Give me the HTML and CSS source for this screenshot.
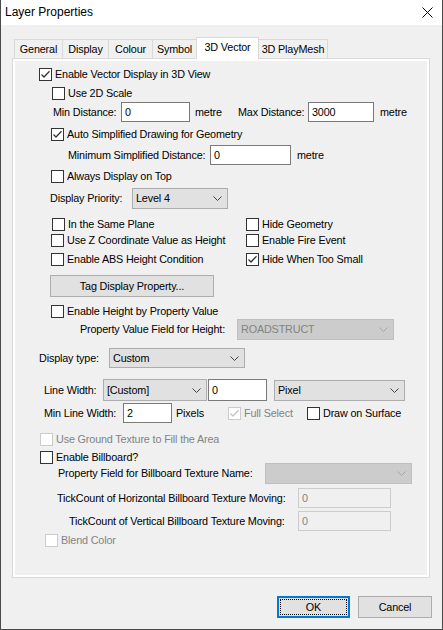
FILE: index.html
```html
<!DOCTYPE html>
<html>
<head>
<meta charset="utf-8">
<title>Layer Properties</title>
<link rel="stylesheet" href="styles.css">
</head>
<body>
<div class="win">
  <div class="titlebar">
    <span class="title">Layer Properties</span>
    <svg class="close" width="11" height="11" viewBox="0 0 11 11"><path d="M0.5 0.5L10.5 10.5M10.5 0.5L0.5 10.5" stroke="#000" stroke-width="1" fill="none"/></svg>
  </div>

  <div class="tabs">
    <div class="tab t-general">General</div>
    <div class="tab t-display">Display</div>
    <div class="tab t-colour">Colour</div>
    <div class="tab t-symbol">Symbol</div>
    <div class="tab t-vector active">3D Vector</div>
    <div class="tab t-mesh">3D PlayMesh</div>
  </div>

  <div class="panel">
    <div class="row cbrow r1">
      <span class="cb"><svg viewBox="0 0 11 11"><polyline points="1.5,5.5 4,8 9.5,2.2"/></svg></span><span class="lbl">Enable Vector Display in 3D View</span>
    </div>
    <div class="row cbrow r2">
      <span class="cb"></span><span class="lbl">Use 2D Scale</span>
    </div>
    <div class="row h20 r3">
      <span class="txt w-mind">Min Distance:</span>
      <span class="field w-mindin">0</span>
      <span class="txt unit1">metre</span>
      <span class="txt w-maxd">Max Distance:</span>
      <span class="field w-maxdin">3000</span>
      <span class="txt unit2">metre</span>
    </div>
    <div class="row cbrow r4">
      <span class="cb"><svg viewBox="0 0 11 11"><polyline points="1.5,5.5 4,8 9.5,2.2"/></svg></span><span class="lbl">Auto Simplified Drawing for Geometry</span>
    </div>
    <div class="row h20 r5">
      <span class="txt w-msd">Minimum Simplified Distance:</span>
      <span class="field w-msdin">0</span>
      <span class="txt unit3">metre</span>
    </div>
    <div class="row cbrow r6">
      <span class="cb"></span><span class="lbl">Always Display on Top</span>
    </div>
    <div class="row h21 r7">
      <span class="txt w-dp">Display Priority:</span>
      <span class="sel w-dpsel"><span>Level 4</span><svg class="chev" viewBox="0 0 9 5"><polyline points="0.5,0.5 4.5,4.5 8.5,0.5"/></svg></span>
    </div>
    <div class="row cbrow r8">
      <div class="col1 c1a"><span class="cb"></span><span class="lbl">In the Same Plane</span></div>
      <div class="col2"><span class="cb"></span><span class="lbl">Hide Geometry</span></div>
    </div>
    <div class="row cbrow r9">
      <div class="col1"><span class="cb"></span><span class="lbl">Use Z Coordinate Value as Height</span></div>
      <div class="col2"><span class="cb"></span><span class="lbl">Enable Fire Event</span></div>
    </div>
    <div class="row cbrow r10">
      <div class="col1"><span class="cb"></span><span class="lbl">Enable ABS Height Condition</span></div>
      <div class="col2"><span class="cb"><svg viewBox="0 0 11 11"><polyline points="1.5,5.5 4,8 9.5,2.2"/></svg></span><span class="lbl">Hide When Too Small</span></div>
    </div>
    <div class="row h22 r11">
      <span class="btn w-tag">Tag Display Property...</span>
    </div>
    <div class="row cbrow r12">
      <span class="cb"></span><span class="lbl">Enable Height by Property Value</span>
    </div>
    <div class="row h21 r13">
      <span class="txt w-pvf">Property Value Field for Height:</span>
      <span class="sel dis w-pvfsel"><span>ROADSTRUCT</span><svg class="chev" viewBox="0 0 9 5"><polyline points="0.5,0.5 4.5,4.5 8.5,0.5"/></svg></span>
    </div>
    <div class="row h20 r14">
      <span class="txt w-dt">Display type:</span>
      <span class="sel w-dtsel"><span>Custom</span><svg class="chev" viewBox="0 0 9 5"><polyline points="0.5,0.5 4.5,4.5 8.5,0.5"/></svg></span>
    </div>
    <div class="row h22 r15">
      <span class="txt w-lw">Line Width:</span>
      <span class="sel w-lwsel"><span>[Custom]</span><svg class="chev" viewBox="0 0 9 5"><polyline points="0.5,0.5 4.5,4.5 8.5,0.5"/></svg></span>
      <span class="field w-lwin">0</span>
      <span class="sel w-pxsel"><span>Pixel</span><svg class="chev" viewBox="0 0 9 5"><polyline points="0.5,0.5 4.5,4.5 8.5,0.5"/></svg></span>
    </div>
    <div class="row h20 r16">
      <span class="txt w-mlw">Min Line Width:</span>
      <span class="field w-mlwin">2</span>
      <span class="txt w-pixels">Pixels</span>
      <div class="fullsel"><span class="cb dis"><svg viewBox="0 0 11 11"><polyline points="1.5,5.5 4,8 9.5,2.2"/></svg></span><span class="lbl gray">Full Select</span></div>
      <span class="cb"></span><span class="lbl">Draw on Surface</span>
    </div>
    <div class="row cbrow r17">
      <span class="cb dis"></span><span class="lbl gray">Use Ground Texture to Fill the Area</span>
    </div>
    <div class="row cbrow r18">
      <span class="cb"></span><span class="lbl">Enable Billboard?</span>
    </div>
    <div class="row h21 r19">
      <span class="txt w-pfb">Property Field for Billboard Texture Name:</span>
      <span class="sel dis w-pfbsel"><span></span><svg class="chev" viewBox="0 0 9 5"><polyline points="0.5,0.5 4.5,4.5 8.5,0.5"/></svg></span>
    </div>
    <div class="row h20 r20">
      <span class="txt w-tch">TickCount of Horizontal Billboard Texture Moving:</span>
      <span class="field dis w-tick">0</span>
    </div>
    <div class="row h20 r21">
      <span class="txt w-tcv">TickCount of Vertical Billboard Texture Moving:</span>
      <span class="field dis w-tick">0</span>
    </div>
    <div class="row cbrow r22">
      <span class="cb dis"></span><span class="lbl gray">Blend Color</span>
    </div>
  </div>

  <div class="buttons">
    <span class="btn default w-ok"><span class="focus">OK</span></span>
    <span class="btn w-cancel">Cancel</span>
  </div>
</div>
</body>
</html>
```

FILE: styles.css
```css
* { box-sizing: border-box; }
html, body { margin: 0; padding: 0; }
body {
  width: 443px;
  height: 630px;
  overflow: hidden;
  background: #f0f0f0;
  font-family: "Liberation Sans", Arial, sans-serif;
  font-size: 10.8px;
  letter-spacing: -0.15px;
  line-height: 13px;
  color: #000;
}
.win {
  width: 443px;
  height: 630px;
  background: #f0f0f0;
  border-left: 1px solid #4a4a4a;
  border-right: 1px solid #4a4a4a;
  border-bottom: 1px solid #4a4a4a;
  display: flex;
  flex-direction: column;
}
.titlebar {
  height: 25px;
  flex: none;
  background: #fff;
  display: flex;
  align-items: center;
  justify-content: space-between;
  padding: 0 9px 0 4px;
  font-size: 12px;
  letter-spacing: 0;
}
.close { display: block; }

/* tabs */
.tabs {
  margin-top: 12px;
  margin-left: 13px;
  height: 21px;
  display: flex;
  align-items: flex-end;
  flex: none;
}
.tab {
  height: 19px;
  border: 1px solid #d9d9d9;
  border-bottom: none;
  background: #f0f0f0;
  margin-left: -1px;
  text-align: center;
  line-height: 18px;
  white-space: nowrap;
}
.tab:first-child { margin-left: 0; }
.tab.active {
  height: 22px;
  background: #fff;
  margin-bottom: -1px;
  position: relative;
  z-index: 1;
  line-height: 18px;
}
.t-general { width: 49px; }
.t-display { width: 47px; }
.t-colour { width: 45px; }
.t-symbol { width: 45px; }
.t-vector { width: 63px; }
.t-mesh { width: 70px; }

/* panel */
.panel {
  margin-left: 11px;
  width: 418px;
  height: 520px;
  flex: none;
  border: 1px solid #d9d9d9;
  background: #f0f0f0;
  box-shadow: inset 0 0 0 2px #fff;
}
.row {
  display: flex;
  align-items: center;
  white-space: nowrap;
}
.cbrow { height: 13px; }
.h20 { height: 20px; }
.h21 { height: 21px; }
.h22 { height: 22px; }

.r1 { margin-top: 9px; padding-left: 26px; }
.r2 { margin-top: 6px; padding-left: 39px; }
.r3 { margin-top: 2px; padding-left: 40px; }
.r4 { margin-top: 6px; padding-left: 38px; }
.r5 { margin-top: 4px; padding-left: 55px; }
.r6 { margin-top: 5px; padding-left: 38px; }
.r7 { margin-top: 5px; padding-left: 37px; }
.r8 { margin-top: 9px; padding-left: 39px; }
.r9 { margin-top: 3px; padding-left: 38px; }
.r10 { margin-top: 6px; padding-left: 38px; }
.r11 { margin-top: 9px; padding-left: 37px; }
.r12 { margin-top: 8px; padding-left: 38px; }
.r13 { margin-top: 1px; padding-left: 67px; }
.r14 { margin-top: 8px; padding-left: 26px; }
.r15 { margin-top: 11px; padding-left: 31px; }
.r16 { margin-top: 2px; padding-left: 31px; }
.r17 { margin-top: 10px; padding-left: 27px; }
.r18 { margin-top: 5px; padding-left: 27px; }
.r19 { margin-top: -1px; padding-left: 45px; }
.r20 { margin-top: 4px; padding-left: 44px; }
.r21 { margin-top: 3px; padding-left: 56px; }
.r22 { margin-top: 3px; padding-left: 32px; }

.col1 { width: 195px; display: flex; align-items: center; }
.col1.c1a { width: 194px; }
.col2 { display: flex; align-items: center; }

/* checkbox */
.cb {
  width: 13px;
  height: 13px;
  flex: none;
  border: 1px solid #333;
  background: #fff;
  display: inline-block;
}
.cb svg { display: block; width: 11px; height: 11px; }
.cb polyline { fill: none; stroke: #333; stroke-width: 1.25; }
.cb.dis { border-color: #cccccc; background: #fff; }
.cb.dis polyline { stroke: #c4c4c4; }
.lbl { margin-left: 3px; }
.gray { color: #838383; }

.txt { flex: none; }
.w-mind { width: 68px; }
.w-maxd { width: 70px; }
.unit1 { margin-left: 5px; width: 43px; }
.unit2 { margin-left: 6px; }
.w-msd { width: 142px; }
.unit3 { margin-left: 6px; }
.w-dp { width: 82px; }
.w-pvf { width: 157px; }
.w-dt { width: 70px; }
.w-lw { width: 59px; }
.w-mlw { width: 79px; }
.w-pixels { margin-left: 4px; width: 52px; }
.w-pfb { width: 207px; }
.w-tch { width: 241px; }
.w-tcv { width: 229px; }

/* text field */
.field {
  height: 20px;
  flex: none;
  border: 1px solid #7a7a7a;
  background: #fff;
  padding: 0 3px;
  display: flex;
  align-items: center;
}
.field.dis { border-color: #cccccc; background: #f0f0f0; color: #838383; }
.w-mindin { width: 69px; }
.w-maxdin { width: 66px; }
.w-msdin { width: 81px; }
.w-lwin { width: 59px; height: 22px; margin-left: 1px; }
.w-mlwin { width: 49px; }
.w-tick { width: 93px; }

/* combo */
.sel {
  height: 21px;
  flex: none;
  border: 1px solid #adadad;
  background: #e1e1e1;
  padding: 0 5px 0 3px;
  display: flex;
  align-items: center;
  justify-content: space-between;
}
.chev { width: 9px; height: 5px; display: block; }
.chev polyline { fill: none; stroke: #444; stroke-width: 1; }
.sel.dis { background: #cccccc; border-color: #bfbfbf; color: #838383; }
.sel.dis .chev polyline { stroke: #a6a6a6; }
.w-dpsel { width: 96px; }
.w-pvfsel { width: 157px; }
.w-dtsel { width: 136px; height: 20px; }
.w-lwsel { width: 104px; height: 22px; }
.w-pxsel { width: 131px; margin-left: 7px; }
.w-pfbsel { width: 147px; }

.fullsel { width: 79px; display: flex; align-items: center; }

/* buttons */
.btn {
  flex: none;
  height: 22px;
  border: 1px solid #adadad;
  background: #e1e1e1;
  display: flex;
  align-items: center;
  justify-content: center;
}
.w-tag { width: 164px; }
.buttons {
  margin-top: 18px;
  display: flex;
  justify-content: flex-end;
  gap: 8px;
  padding-right: 10px;
  flex: none;
}
.w-ok { width: 73px; }
.w-cancel { width: 74px; }
.btn.default {
  border: 2px solid #0078d7;
  padding: 1px;
}
.focus {
  width: 100%;
  height: 100%;
  border: 1px dotted #000;
  display: flex;
  align-items: center;
  justify-content: center;
}
```
